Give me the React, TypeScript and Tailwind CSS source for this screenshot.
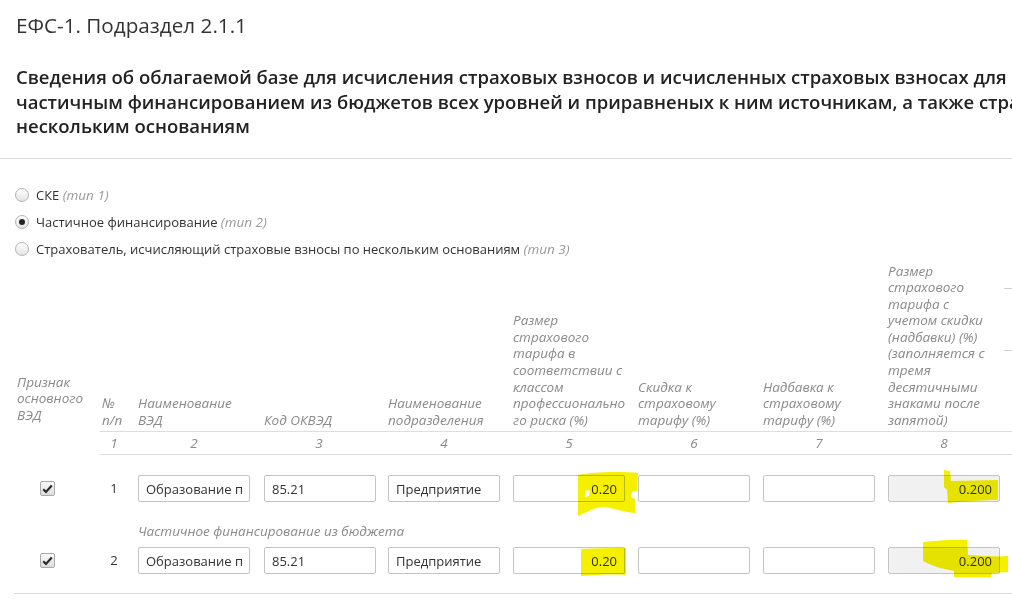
import React from "react";

const COLS = "grid grid-cols-[84px_38px_125px_125px_125px_125px_125px_125px_125px_125px]";

const HEADERS = [
  "Наименование ВЭД",
  "Код ОКВЭД",
  "Наименование подразделения",
  "Размер страхового тарифа в соответствии с классом профессионально го риска (%)",
  "Скидка к страховому тарифу (%)",
  "Надбавка к страховому тарифу (%)",
  "Размер страхового тарифа с учетом скидки (надбавки) (%) (заполняется с тремя десятичными знаками после запятой)"
];

function Radio({ checked, label, type }: { checked?: boolean; label: string; type: string }) {
  return (
    <label className="flex h-[27px] items-center gap-[7px] text-[13px]">
      <span className="flex h-[14px] w-[14px] items-center justify-center rounded-full border border-[#b4b4b4] bg-gradient-to-b from-white to-[#e4e4e4]">
        {checked && <span className="h-[6px] w-[6px] rounded-full bg-[#222]" />}
      </span>
      <span>
        {label} <i className="text-[13.5px] text-[#999]">({type})</i>
      </span>
    </label>
  );
}

function CheckBox() {
  return (
    <span className="ml-[24px] flex h-[15px] w-[15px] items-center justify-center rounded-[2px] border border-[#a9a9a9] bg-gradient-to-b from-[#fafafa] to-[#dcdcdc]">
      <svg width="11" height="10" viewBox="0 0 11 10">
        <path d="M1.2 5.2 L4 8 L9.8 1.6" fill="none" stroke="#2a2a2a" strokeWidth="2.2" strokeLinejoin="miter" />
      </svg>
    </span>
  );
}

function Field({ value, right, disabled }: { value?: string; right?: boolean; disabled?: boolean }) {
  return (
    <input
      readOnly
      value={value ?? ""}
      className={`h-[27px] w-[112px] rounded-[2px] border border-[#c4c4c4] px-[7px] text-[13px] text-[#333] outline-none ${
        right ? "text-right" : ""
      } ${disabled ? "bg-[#f1f1f1]" : "bg-white"}`}
    />
  );
}

function DataRow({ n }: { n: number }) {
  return (
    <div className={`${COLS} items-center`}>
      <div className="flex items-center">
        <CheckBox />
      </div>
      <div className="pr-[10px] text-center text-[13px]">{n}</div>
      <div>
        <Field value="Образование профессиональное" />
      </div>
      <div className="pl-[1px]">
        <Field value="85.21" />
      </div>
      <div>
        <Field value="Предприятие" />
      </div>
      <div>
        <Field value="0.20" right />
      </div>
      <div>
        <Field />
      </div>
      <div>
        <Field />
      </div>
      <div>
        <Field value="0.200" right disabled />
      </div>
      <div />
    </div>
  );
}

export default function App() {
  return (
    <div className="relative h-[604px] w-[1012px] overflow-hidden bg-white font-['Open_Sans',sans-serif] text-[#333]">
      <h1 className="px-4 pt-[11px] text-[20.7px] leading-[28px] font-normal text-[#333]">ЕФС-1. Подраздел 2.1.1</h1>

      <h2 className="mt-[26px] whitespace-nowrap px-4 text-[18.5px] leading-[24.5px] font-semibold text-[#222]">
        Сведения об облагаемой базе для исчисления страховых взносов и исчисленных страховых взносах для страхователей с
        <br />
        частичным финансированием из бюджетов всех уровней и приравненых к ним источникам, а также страхователей, исчисляющих страховые взносы по
        <br />
        нескольким основаниям
      </h2>

      <div className="mt-[19px] border-t border-[#dcdcdc]" />

      <div className="mt-[23px] pl-[15px]">
        <Radio label="СКЕ" type="тип 1" />
        <Radio checked label="Частичное финансирование" type="тип 2" />
        <Radio label="Страхователь, исчисляющий страховые взносы по нескольким основаниям" type="тип 3" />
      </div>

      <div className="pl-4">
        <div className={`${COLS} items-end text-[13.5px] leading-[16.6px] italic text-[#8a8a8a]`}>
          <div className="pb-[9px] pl-[1px] pr-2">Признак основного ВЭД</div>
          <div className="flex h-full items-end border-b border-[#dedede] pb-[3px] pl-[2px]">
            <span>
              №
              <br />
              п/п
            </span>
          </div>
          {HEADERS.map((h, i) => (
            <div key={i} className={`flex h-full items-end border-b border-[#dedede] pb-[3px] pr-[12px] ${i === 1 ? "pl-[1px]" : ""}`}>
              <span>{h}</span>
            </div>
          ))}
          <div className="relative h-full border-b border-[#dedede]">
            <div className="ml-[-9px] mt-[25px] w-[20px] border-t border-[#cfcfcf]" />
            <div className="ml-[-9px] mt-[61px] w-[20px] border-t border-[#cfcfcf]" />
          </div>
        </div>

        <div className={`${COLS} h-[23px] items-center text-[13.5px] italic text-[#8a8a8a]`}>
          <div />
          {["1", "2", "3", "4", "5", "6", "7", "8"].map((n, i) => (
            <div key={n} className={`flex h-full items-center justify-center border-b border-[#dedede] ${i === 0 ? "pr-[10px]" : "pr-[13px]"}`}>
              {n}
            </div>
          ))}
          <div className="h-full border-b border-[#dedede]" />
        </div>

        <div className="pt-[20px]">
          <DataRow n={1} />
        </div>
        <div className={`${COLS} mt-[20px]`}>
          <div />
          <div />
          <div className="col-span-5 text-[13.5px] leading-[18px] italic text-[#8a8a8a]">Частичное финансирование из бюджета</div>
        </div>
        <div className="mt-[7px]">
          <DataRow n={2} />
        </div>
      </div>

      <div className="ml-[14px] mt-[19px] border-t border-[#dcdcdc]" />

      {/* hand-drawn highlighter marks over the values */}
      <svg className="pointer-events-none absolute left-0 top-0 mix-blend-multiply" width="1012" height="604">
        <g fill="#f4f000">
          <path d="M578 475 C590 472 620 471 638 473 L637 491 L632 492 L631 497 L635 499 L635 513 C625 512 615 509 606 507 C596 506 588 512 578 516 Z" />
          <path d="M581 549 C595 548 612 548 626 548 L626 575 C612 574 596 575 581 576 Z" />
          <path d="M944 470 L950 471 L951 481 L998 480 L998 500 C985 500 968 501 948 503 L947 490 L944 487 Z" />
          <path d="M923 542 C935 541 952 539 967 540 L968 555 C985 556 998 557 1008 556 L1008 572 L992 573 L991 577 L954 577 L954 571 C943 569 932 566 923 561 Z" />
        </g>
        <g fill="#ffffff">
          <path d="M585 491 C587 490 589 490 590 491 L589 496 L585 497 Z" />
        </g>
      </svg>
    </div>
  );
}
